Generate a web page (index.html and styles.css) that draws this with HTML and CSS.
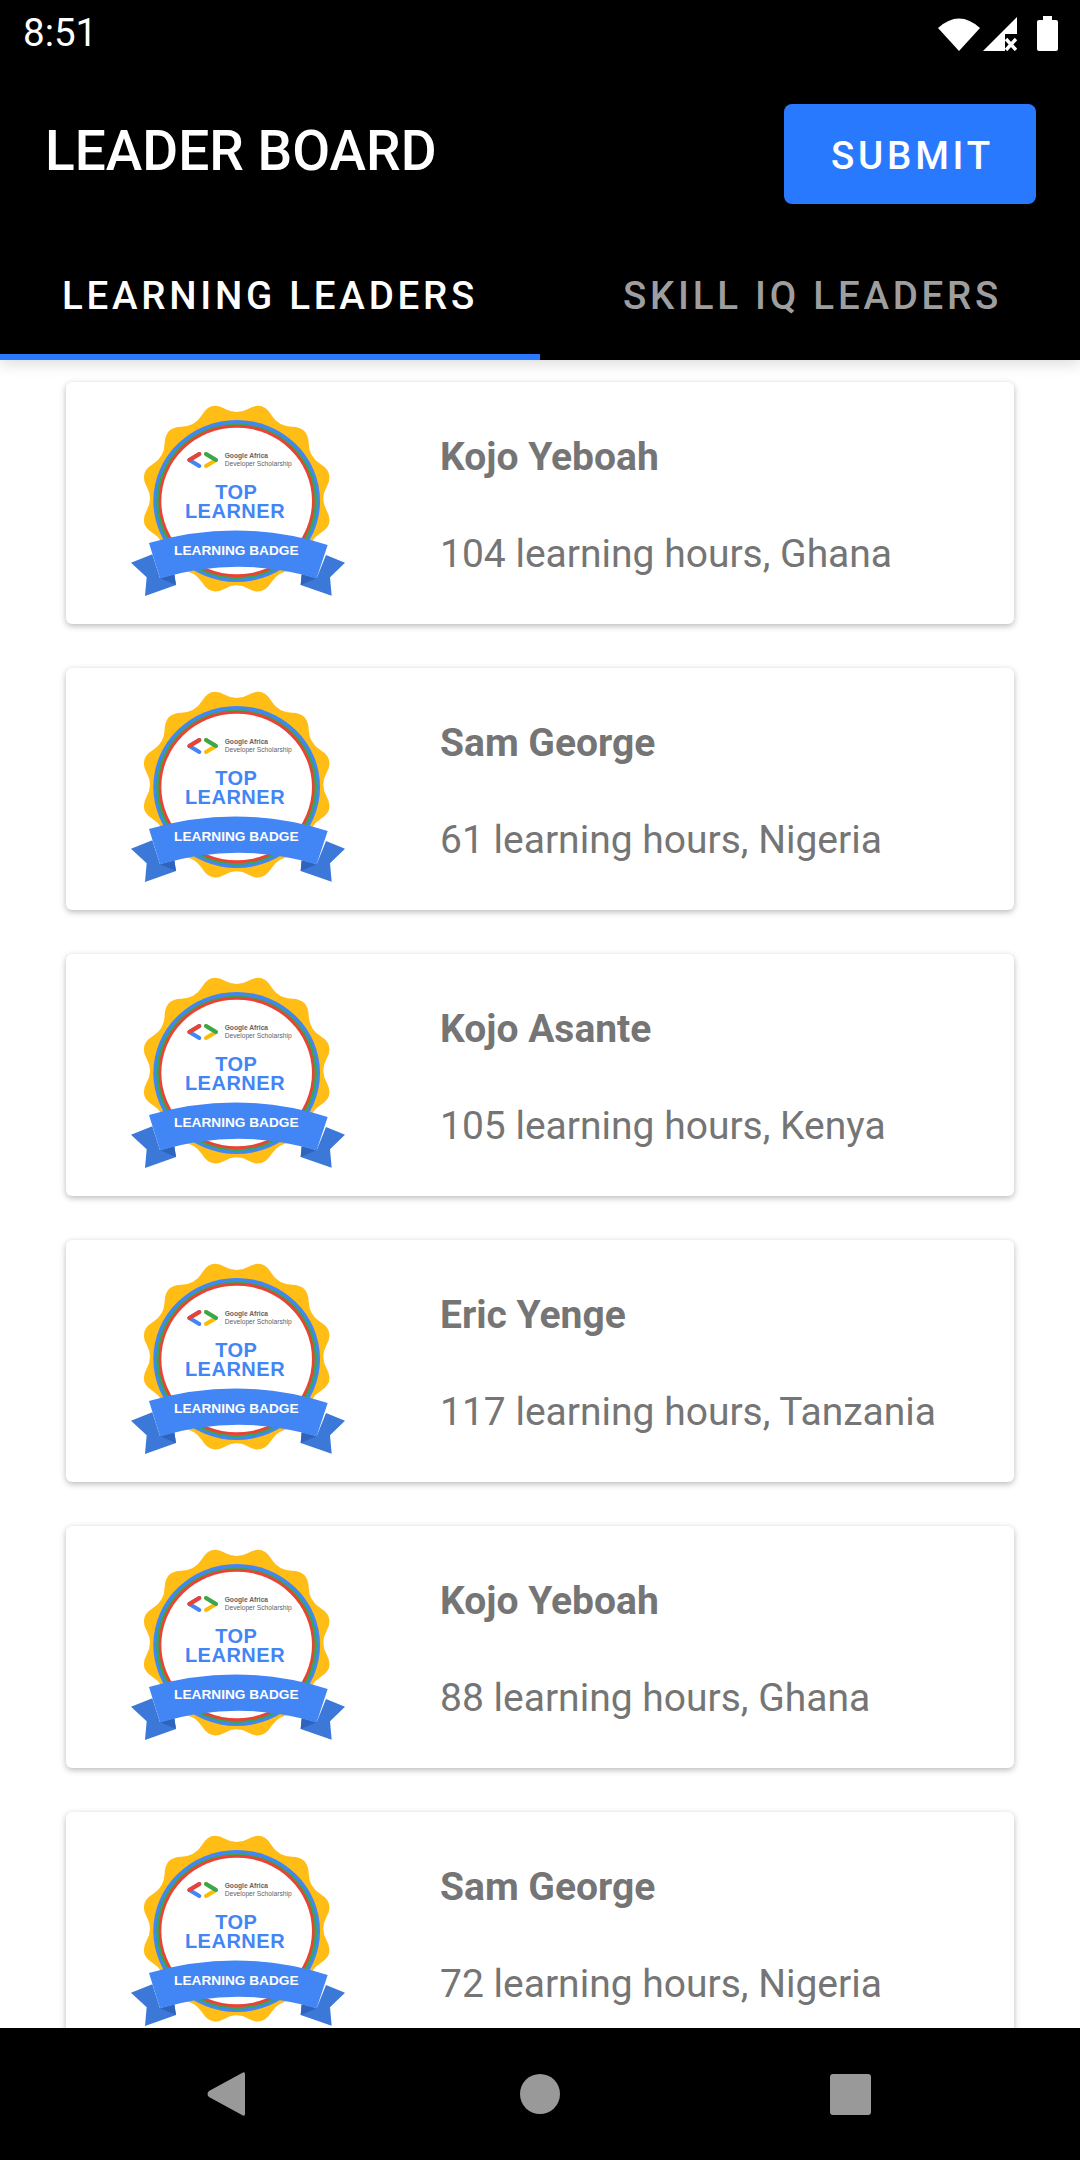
FILE: index.html
```html
<!DOCTYPE html>
<html lang="en">
<head>
<meta charset="utf-8">
<title>Leader Board</title>
<link rel="stylesheet" href="styles.css">
</head>
<body>
<svg class="defs" width="0" height="0" aria-hidden="true">
  <defs>
    <g id="badge-art">
      <path fill="#ffbd16" transform="translate(380 326)" d="M270,-35.5 Q250,0 270,35.5 Q294,79 251,104 Q217,125 216,166 Q215,215 166,216 Q125,217 104,251 Q79,294 35.5,270 Q0,250 -35.5,270 Q-79,294 -104,251 Q-125,217 -166,216 Q-215,215 -216,166 Q-217,125 -251,104 Q-294,79 -270,35.5 Q-250,0 -270,-35.5 Q-294,-79 -251,-104 Q-217,-125 -216,-166 Q-215,-215 -166,-216 Q-125,-217 -104,-251 Q-79,-294 -35.5,-270 Q0,-250 35.5,-270 Q79,-294 104,-251 Q125,-217 166,-216 Q215,-215 216,-166 Q217,-125 251,-104 Q294,-79 270,-35.5 Z"/>
      <ellipse cx="380" cy="333" rx="250" ry="243" fill="#4285f4"/>
      <ellipse cx="380" cy="334" rx="241" ry="233" fill="#34a853"/>
      <ellipse cx="380" cy="333" rx="234" ry="229" fill="#ea4335"/>
      <ellipse cx="380" cy="333" rx="226" ry="220" fill="#fff"/>
      <path d="M268 192 L238 210 L268 228" fill="none" stroke="#4285f4" stroke-width="12" stroke-linecap="round" stroke-linejoin="round"/>
      <path d="M238 210 L268 192" fill="none" stroke="#ea4335" stroke-width="12" stroke-linecap="round"/>
      <path d="M288 192 L318 210 L288 228" fill="none" stroke="#fbbc04" stroke-width="12" stroke-linecap="round" stroke-linejoin="round"/>
      <path d="M288 192 L318 210" fill="none" stroke="#34a853" stroke-width="12" stroke-linecap="round"/>
      <path fill="#3b78d8" d="M63 518 L127 493 L150 565 L193 553 L198 585 L105 618 L110 562 Z"/>
      <path fill="#3b78d8" d="M705 518 L648 495 L620 565 L575 553 L572 585 L665 617 L660 562 Z"/>
      <path fill="#2f64bd" d="M150 565 L193 553 L198 585 Z"/>
      <path fill="#2f64bd" d="M620 565 L575 553 L572 585 Z"/>
      <path fill="#4285f4" d="M117 459 Q385 381 653 465 L620 565 Q385 495 150 565 Z"/>
    </g>
  </defs>
</svg>
<div class="screen">
  <div class="status">
    <span class="time">8:51</span>
    <div class="status-icons">
      <svg class="ic-wifi" viewBox="0 0 42 34"><path d="M0 11 Q21 -8 42 11 L21 34 Z" fill="#fff"/></svg>
      <svg class="ic-signal" viewBox="0 0 34 34"><path d="M0 34 L34 0 L34 17 L22 17 L22 34 Z" fill="#fff"/><path d="M23 22 L33 33 M33 22 L23 33" stroke="#fff" stroke-width="3.4" fill="none"/></svg>
      <svg class="ic-battery" viewBox="0 0 21 35"><path d="M6 0 H15 V4 H19 Q21 4 21 6 V33 Q21 35 19 35 H2 Q0 35 0 33 V6 Q0 4 2 4 H6 Z" fill="#fff"/></svg>
    </div>
  </div>
  <header class="toolbar">
    <h1 class="title">LEADER BOARD</h1>
    <button class="submit">SUBMIT</button>
  </header>
  <nav class="tabs">
    <div class="tab tab-active">LEARNING LEADERS</div>
    <div class="tab tab-idle">SKILL IQ LEADERS</div>
  </nav>
  <main class="list">
    <article class="card">
      <svg class="badge" viewBox="0 0 780 678"><use href="#badge-art"/><text class="bg-small bg-small-strong" x="344" y="203">Google Africa</text><text class="bg-small" x="344" y="228">Developer Scholarship</text><text class="bg-top" x="379" y="328">TOP</text><text class="bg-top" x="375" y="383">LEARNER</text><text class="bg-ribbon" x="379" y="495">LEARNING BADGE</text></svg>
      <div class="info"><div class="name">Kojo Yeboah</div><div class="detail">104 learning hours, Ghana</div></div>
    </article>
    <article class="card">
      <svg class="badge" viewBox="0 0 780 678"><use href="#badge-art"/><text class="bg-small bg-small-strong" x="344" y="203">Google Africa</text><text class="bg-small" x="344" y="228">Developer Scholarship</text><text class="bg-top" x="379" y="328">TOP</text><text class="bg-top" x="375" y="383">LEARNER</text><text class="bg-ribbon" x="379" y="495">LEARNING BADGE</text></svg>
      <div class="info"><div class="name">Sam George</div><div class="detail">61 learning hours, Nigeria</div></div>
    </article>
    <article class="card">
      <svg class="badge" viewBox="0 0 780 678"><use href="#badge-art"/><text class="bg-small bg-small-strong" x="344" y="203">Google Africa</text><text class="bg-small" x="344" y="228">Developer Scholarship</text><text class="bg-top" x="379" y="328">TOP</text><text class="bg-top" x="375" y="383">LEARNER</text><text class="bg-ribbon" x="379" y="495">LEARNING BADGE</text></svg>
      <div class="info"><div class="name">Kojo Asante</div><div class="detail">105 learning hours, Kenya</div></div>
    </article>
    <article class="card">
      <svg class="badge" viewBox="0 0 780 678"><use href="#badge-art"/><text class="bg-small bg-small-strong" x="344" y="203">Google Africa</text><text class="bg-small" x="344" y="228">Developer Scholarship</text><text class="bg-top" x="379" y="328">TOP</text><text class="bg-top" x="375" y="383">LEARNER</text><text class="bg-ribbon" x="379" y="495">LEARNING BADGE</text></svg>
      <div class="info"><div class="name">Eric Yenge</div><div class="detail">117 learning hours, Tanzania</div></div>
    </article>
    <article class="card">
      <svg class="badge" viewBox="0 0 780 678"><use href="#badge-art"/><text class="bg-small bg-small-strong" x="344" y="203">Google Africa</text><text class="bg-small" x="344" y="228">Developer Scholarship</text><text class="bg-top" x="379" y="328">TOP</text><text class="bg-top" x="375" y="383">LEARNER</text><text class="bg-ribbon" x="379" y="495">LEARNING BADGE</text></svg>
      <div class="info"><div class="name">Kojo Yeboah</div><div class="detail">88 learning hours, Ghana</div></div>
    </article>
    <article class="card">
      <svg class="badge" viewBox="0 0 780 678"><use href="#badge-art"/><text class="bg-small bg-small-strong" x="344" y="203">Google Africa</text><text class="bg-small" x="344" y="228">Developer Scholarship</text><text class="bg-top" x="379" y="328">TOP</text><text class="bg-top" x="375" y="383">LEARNER</text><text class="bg-ribbon" x="379" y="495">LEARNING BADGE</text></svg>
      <div class="info"><div class="name">Sam George</div><div class="detail">72 learning hours, Nigeria</div></div>
    </article>
  </main>
  <footer class="navbar">
    <svg class="nav-back" viewBox="0 0 38 44"><path d="M38 2 V42 Q38 45 35 43 L2 25 Q-1 22 2 19 L35 1 Q38 -1 38 2 Z" fill="#999"/></svg>
    <span class="nav-home"></span>
    <span class="nav-recent"></span>
  </footer>
</div>
</body>
</html>
```
FILE: styles.css
```css
html, body { margin: 0; padding: 0; background: #fff; }
.defs { position: absolute; }
.screen {
  width: 1080px;
  height: 2160px;
  display: flex;
  flex-direction: column;
  overflow: hidden;
  font-family: Roboto, "Liberation Sans", sans-serif;
  background: #fff;
}
.status {
  height: 66px;
  flex: none;
  background: #000;
  color: #fff;
  display: flex;
  align-items: center;
  justify-content: space-between;
  padding: 0 22px 0 23px;
}
.time { font-size: 38.5px; line-height: 66px; }
.status-icons { display: flex; align-items: flex-start; height: 35px; }
.ic-wifi { width: 42px; height: 34px; margin-top: 1px; }
.ic-signal { width: 34px; height: 34px; margin: 1px 0 0 3px; }
.ic-battery { width: 21px; height: 35px; margin-left: 20px; }
.toolbar {
  height: 162px;
  flex: none;
  background: #000;
  display: flex;
  align-items: flex-start;
  justify-content: space-between;
  padding: 38px 44px 0 45px;
  box-sizing: border-box;
}
.title {
  margin: 2px 0 0;
  color: #fff;
  font-size: 55px;
  font-weight: 500;
  line-height: 90px;
}
.submit {
  width: 252px;
  height: 100px;
  border: 0;
  border-radius: 8px;
  background: #2979ff;
  color: #fff;
  font-family: inherit;
  font-size: 38.5px;
  font-weight: 500;
  letter-spacing: 3.8px;
  padding: 2px 0 0 5px;
}
.tabs {
  height: 132px;
  flex: none;
  background: #000;
  display: flex;
  box-shadow: 0 4px 14px rgba(0,0,0,.14);
  position: relative;
  z-index: 1;
}
.tab {
  flex: 0 0 540px;
  box-sizing: border-box;
  display: flex;
  align-items: center;
  justify-content: center;
  color: #9e9e9e;
  font-size: 38.5px;
  font-weight: 500;
  letter-spacing: 3.75px;
  padding-top: 8px;
  border-bottom: 6px solid transparent;
}
.tab-active { color: #fff; border-bottom-color: #2979ff; }
.tab-idle { padding-left: 5px; }
.list {
  flex: 1;
  min-height: 0;
  overflow: hidden;
  display: flex;
  flex-direction: column;
  gap: 44px;
  padding: 22px 66px 0;
}
.card {
  flex: none;
  height: 242px;
  display: flex;
  background: #fff;
  border-radius: 6px;
  box-shadow: 0 2px 6px rgba(0,0,0,.28);
}
.badge { width: 260px; height: 226px; margin: 8px 0 0 44px; flex: none; }
.info { margin-left: 70px; color: #757575; }
.name { font-size: 39px; font-weight: 700; line-height: 44px; margin-top: 53px; }
.detail { font-size: 39px; line-height: 44px; margin-top: 53px; }
.navbar {
  height: 132px;
  flex: none;
  background: #000;
  position: relative;
  z-index: 2;
}
.nav-back { position: absolute; left: 207px; top: 44px; width: 38px; height: 44px; }
.nav-home { position: absolute; left: 520px; top: 46px; width: 40px; height: 40px; border-radius: 50%; background: #999; }
.nav-recent { position: absolute; left: 830px; top: 46px; width: 41px; height: 41px; border-radius: 3px; background: #999; }
.bg-small { font-family: "Liberation Sans", sans-serif; font-size: 20px; fill: #5f6368; }
.bg-small-strong { font-weight: 700; }
.bg-top { font-family: "Liberation Sans", sans-serif; font-weight: 700; font-size: 60px; letter-spacing: 1.5px; fill: #4285f4; text-anchor: middle; }
.bg-ribbon { font-family: "Liberation Sans", sans-serif; font-weight: 700; font-size: 41px; fill: #fff; text-anchor: middle; }
```
